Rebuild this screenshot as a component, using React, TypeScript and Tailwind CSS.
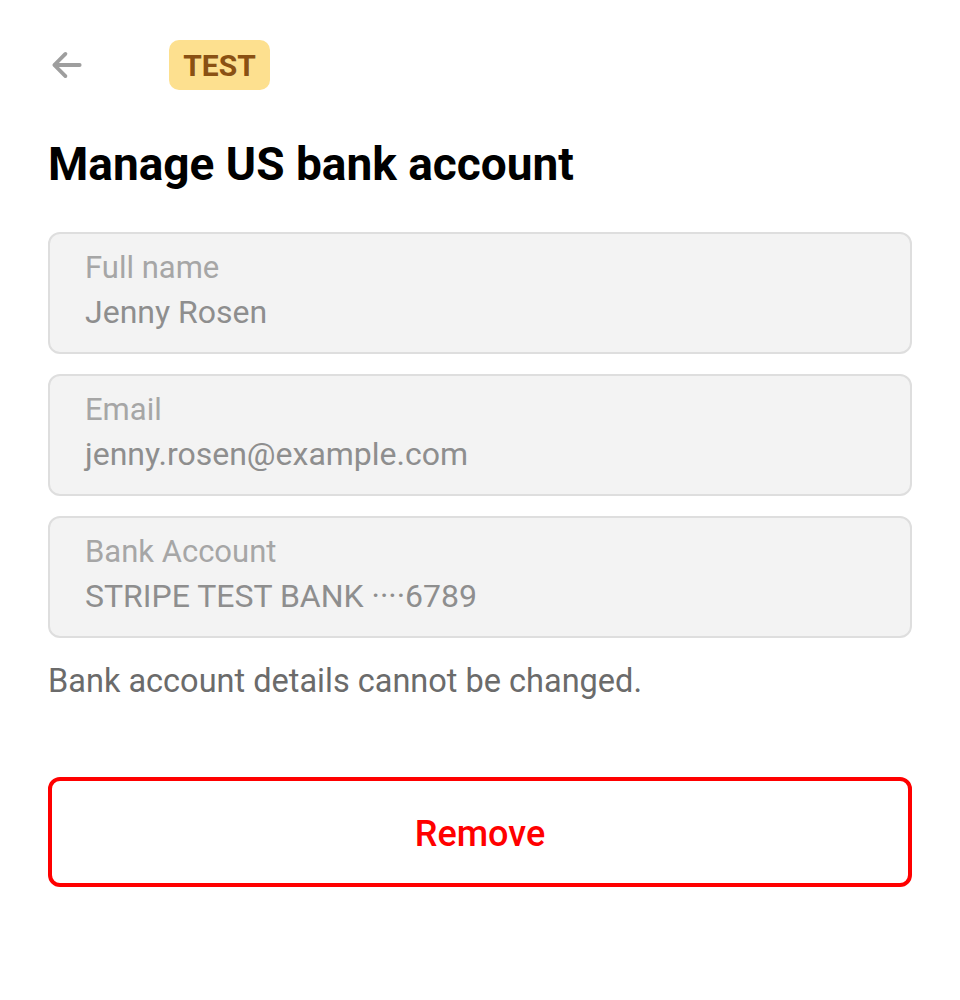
import React from "react";

const fields = [
  { label: "Full name", value: "Jenny Rosen" },
  { label: "Email", value: "jenny.rosen@example.com" },
  { label: "Bank Account", value: "STRIPE TEST BANK \u00b7\u00b7\u00b7\u00b76789" },
];

const App: React.FC = () => {
  return (
    <div className="min-h-screen bg-white px-12 font-['Roboto',sans-serif]">
      <div className="flex items-center pt-10">
        <button className="flex h-[50px] w-[40px] items-center text-[#9e9e9e]">
          <svg width="38" height="38" viewBox="0 0 24 24" fill="none" stroke="currentColor" strokeWidth={2.4} strokeLinecap="round" strokeLinejoin="round">
            <path d="M20 12H4.5" />
            <path d="M11 5l-7 7 7 7" />
          </svg>
        </button>
        <span className="ml-[81px] flex h-[50px] w-[101px] items-center justify-center rounded-[10px] bg-[#fde08f] text-[30px] font-bold text-[#8a5113]">
          TEST
        </span>
      </div>

      <h1 className="mt-[47px] text-[46px] font-bold leading-[54px] text-black">
        Manage US bank account
      </h1>

      <div className="mt-[41px] flex flex-col gap-[20px]">
        {fields.map((f) => (
          <div
            key={f.label}
            className="h-[122px] rounded-[12px] border-2 border-[#dedede] bg-[#f3f3f3] px-[35px] pt-[14px]"
          >
            <div className="text-[31px] leading-[40px] text-[#a6a6a6]">{f.label}</div>
            <div className="text-[32px] leading-[48px] text-[#8e8e8e]">{f.value}</div>
          </div>
        ))}
      </div>

      <p className="mt-[23px] text-[32.5px] leading-[40px] text-[#6b6b6b]">
        Bank account details cannot be changed.
      </p>

      <button className="mt-[76px] flex h-[110px] w-full items-center justify-center rounded-[12px] border-4 border-[#ff0000] bg-white pt-[3px] text-[36px] font-medium text-[#ff0000]">
        Remove
      </button>
    </div>
  );
};

export default App;
